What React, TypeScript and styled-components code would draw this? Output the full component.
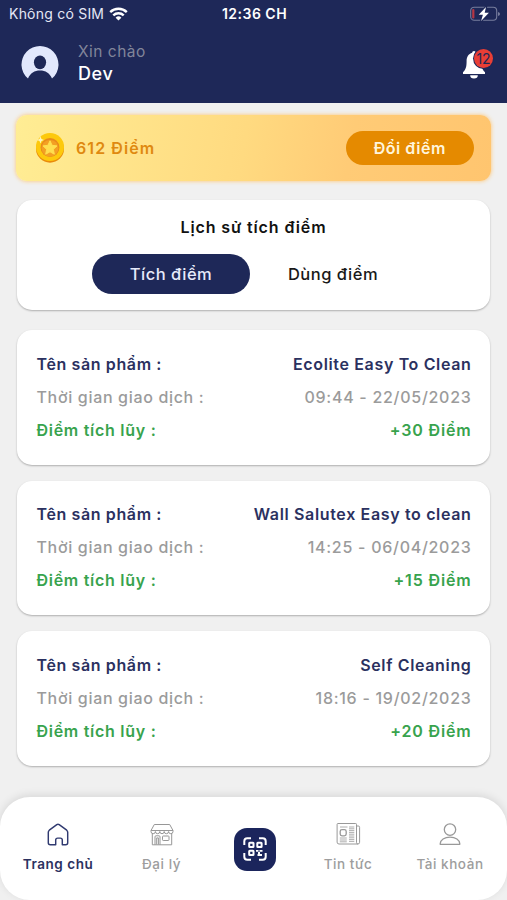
import React from "react";
import styled, { createGlobalStyle } from "styled-components";

const NAVY = "#1e2858";

const GlobalStyle = createGlobalStyle`
  * { box-sizing: border-box; }
  body { margin: 0; background: #f0f0f0; font-family: Inter, "Noto Sans", sans-serif; }
  button { font-family: inherit; border: 0; padding: 0; background: none; }
`;

const Screen = styled.div`
  width: 507px;
  height: 900px;
  display: flex;
  flex-direction: column;
  overflow: hidden;
  background: #f0f0f0;
`;

const Header = styled.header`
  height: 102.5px;
  flex: none;
  background: ${NAVY};
  color: #fff;
`;

const StatusBar = styled.div`
  height: 27px;
  padding: 0 7px 0 9px;
  display: grid;
  grid-template-columns: 1fr auto 1fr;
  align-items: center;
`;

const Carrier = styled.div`
  display: flex;
  align-items: center;
  gap: 5px;
  font-size: 14px;
  letter-spacing: 0.22px;
  color: #e4e7f5;
`;

const Clock = styled.div`
  font-size: 14px;
  font-weight: 600;
  letter-spacing: 0.5px;
`;

const Battery = styled.div`
  display: flex;
  justify-content: flex-end;
`;

const Profile = styled.div`
  height: 73px;
  display: flex;
  align-items: center;
  padding: 0 14px 0 21px;
`;

const Greeting = styled.div`
  margin-left: 19px;
  flex: 1;
`;

const Hello = styled.div`
  font-size: 15.5px;
  line-height: 21px;
  letter-spacing: 0.5px;
  color: #81859a;
`;

const UserName = styled.div`
  font-size: 18px;
  line-height: 24px;
  font-weight: 500;
  letter-spacing: 0.6px;
`;

const BellButton = styled.button`
  position: relative;
  width: 32px;
  height: 32px;
`;

const Badge = styled.span`
  position: absolute;
  left: 13px;
  top: 1px;
  width: 19px;
  height: 19px;
  border-radius: 50%;
  background: #e93e35;
  box-shadow: 0 0 0 1px ${NAVY};
  color: #1f2754;
  font-size: 14px;
  line-height: 19px;
  text-align: center;
`;

const Content = styled.main`
  flex: 1;
  padding: 12.5px 17px 0;
`;

const PointsBanner = styled.section`
  height: 66px;
  margin: 0 -1px 19px;
  padding: 0 17px 0 20px;
  border-radius: 11px;
  background: linear-gradient(100deg, #ffed94 0%, #ffda80 48%, #ffcb76 70%, #ffc56f 100%);
  box-shadow: 0 0 4px #ffc46e;
  display: flex;
  align-items: center;
`;

const Points = styled.span`
  flex: 1;
  margin-left: 12px;
  color: #df8910;
  font-size: 16px;
  font-weight: 600;
  letter-spacing: 1.08px;
`;

const RedeemButton = styled.button`
  width: 128.5px;
  height: 34px;
  border-radius: 17px;
  background: #e58a00;
  color: #fff5dc;
  font-size: 16px;
  font-weight: 600;
  letter-spacing: 0.5px;
`;

const Card = styled.section`
  border-radius: 15px;
  background: #fff;
  box-shadow: 0 1px 2px rgba(0, 0, 0, 0.28);
`;

const HistoryCard = styled(Card)`
  height: 109.5px;
  padding-top: 16.5px;
  margin-bottom: 20.5px;
`;

const Title = styled.h1`
  margin: 0 0 16.5px;
  color: #111;
  font-size: 16px;
  line-height: 21px;
  font-weight: 600;
  letter-spacing: 0.87px;
  text-align: center;
`;

const Tabs = styled.div`
  display: flex;
  padding-left: 75px;
  gap: 4px;
`;

const Tab = styled.button<{ $active?: boolean }>`
  width: 158px;
  height: 40px;
  padding-bottom: 1px;
  border-radius: 20px;
  background: ${(p) => (p.$active ? NAVY : "transparent")};
  color: ${(p) => (p.$active ? "#e6eafa" : "#191919")};
  font-size: 16.5px;
  font-weight: ${(p) => (p.$active ? 500 : 450)};
  letter-spacing: 0.5px;
`;

const TransactionCard = styled(Card)`
  height: 134.5px;
  margin-bottom: 16.2px;
  padding: 17.6px 18.5px 0 19.5px;
`;

const Row = styled.div<{ $color: string; $weight: number }>`
  display: flex;
  justify-content: space-between;
  height: 33px;
  line-height: 33px;
  white-space: pre;
  color: ${(p) => p.$color};
  font-size: 16px;
  font-weight: ${(p) => p.$weight};
`;

const Spaced = styled.span<{ $spacing: number }>`
  letter-spacing: ${(p) => p.$spacing}px;
`;

const Nav = styled.nav`
  height: 103px;
  flex: none;
  border-radius: 30px;
  background: #fff;
  box-shadow: 0 -2px 8px rgba(0, 0, 0, 0.1);
  display: grid;
  grid-template-columns: 116px 91px 96px 90px 114px;
`;

const NavItem = styled.button<{ $active?: boolean }>`
  display: flex;
  flex-direction: column;
  align-items: center;
  padding-top: 26px;
  gap: 8.5px;
  color: ${(p) => (p.$active ? "#2b315f" : "#9d9d9d")};
  font-size: 13.5px;
  line-height: 18px;
  font-weight: ${(p) => (p.$active ? 600 : 500)};
  letter-spacing: 0.55px;
  white-space: nowrap;
`;

const ScanItem = styled.button`
  display: flex;
  justify-content: center;
  padding-top: 30.5px;
`;

const ScanTile = styled.span`
  width: 42px;
  height: 43px;
  border-radius: 13px;
  background: #1b255c;
  display: flex;
  align-items: center;
  justify-content: center;
`;

const WifiIcon = () => (
  <svg width="19" height="14" viewBox="0 0 19 14" fill="none" stroke="#fff" strokeWidth="2.4">
    <path d="M1.2 5.1a11.9 11.9 0 0 1 16.6 0" />
    <path d="M4.3 8.4a7.4 7.4 0 0 1 10.4 0" />
    <path d="M9.5 13.6 6.6 10.7a4.2 4.2 0 0 1 5.8 0z" fill="#fff" stroke="none" />
  </svg>
);

const BatteryIcon = () => (
  <svg width="30" height="16" viewBox="0 0 30 16">
    <rect x="0.7" y="1.2" width="26" height="13" rx="3.5" fill="none" stroke="#777d9d" strokeWidth="1.1" />
    <path d="M28 6v4q2-.5 2-2t-2-2" fill="#777d9d" />
    <rect x="2.2" y="3" width="2.2" height="9.4" rx="1" fill="#b63644" />
    <path d="M16 1 8.7 8.7h4.2L11.1 15l7.8-8.3h-4.2z" fill="#fff" stroke={NAVY} strokeWidth="2.2" paintOrder="stroke" />
  </svg>
);

const AvatarIcon = () => (
  <svg width="38" height="38" viewBox="0 0 38 38">
    <path d="M7 33.6A18.500 18.500 0 1 1 31 33.600C28.600 28.200 24.500 25.600 19 25.600S9.400 28.200 7 33.600z" fill="#e2e8fd" />
    <ellipse cx="19" cy="17.300" rx="6.100" ry="6.900" fill={NAVY} />
  </svg>
);

const BellIcon = () => (
  <svg width="24" height="29" viewBox="0 0 24 29" fill="#fff">
    <path d="M12 1c-1 0-1.800.8-1.800 1.800C6.400 4 4.600 7 4.600 11c0 6-.8 8.500-3.600 11.200V24h22v-1.800C20.200 19.500 19.400 17 19.400 11c0-4-1.800-7-5.600-8.200C13.800 1.800 13 1 12 1z" />
    <path d="M8.200 25.200h7.600a3.800 3.300 0 0 1-7.600 0z" />
  </svg>
);

const BellWrap = styled.span`
  position: absolute;
  left: 1px;
  top: 2px;
  display: flex;
`;

const CoinIcon = () => (
  <svg width="28" height="30" viewBox="0 0 28 30">
    <ellipse cx="14" cy="15.700" rx="14" ry="14" fill="#e98b0b" />
    <circle cx="14" cy="14" r="14" fill="#fdc90c" />
    <circle cx="14" cy="14.500" r="9.400" fill="#e88a1c" />
    <circle cx="14" cy="15.300" r="8.400" fill="#f3a023" />
    <path
      d="m14 7.800 2.100 4.500 4.900.6-3.600 3.400.9 4.900-4.300-2.400-4.300 2.400.9-4.900L7 12.900l4.900-.6z"
      fill="#ffdf4f"
      stroke="#ffdf4f"
      strokeLinejoin="round"
    />
    <path d="m4.500 3.500 1 2.500 2.500 1-2.500 1-1 2.500-1-2.500L1 7l2.500-1z" fill="#fff6bd" />
  </svg>
);

const HomeIcon = () => (
  <svg width="22" height="23" viewBox="0 0 22 23" fill="none" stroke="#303a70" strokeWidth="1.450" strokeLinejoin="round">
    <path d="M1.300 9.300Q1.300 8 2.300 7.200L9.800 1.600q1.200-.9 2.400 0l7.500 5.600q1 .8 1 2.100v10.400q0 2-2 2h-3.400v-4.600q0-2-2-2h-2.600q-2 0-2 2v4.600H3.300q-2 0-2-2z" />
  </svg>
);

const StoreIcon = () => (
  <svg width="24" height="23" viewBox="0 0 24 23" fill="none" stroke="#979797" strokeWidth="1">
    <path d="M4.300 1.500h15.400l3.300 6H1z" />
    <path d="M1 7.500v1a2.200 2.200 0 0 0 4.400 0 2.200 2.200 0 0 0 4.400 0 2.200 2.200 0 0 0 4.400 0 2.200 2.200 0 0 0 4.400 0 2.200 2.200 0 0 0 4.400 0v-1" />
    <path d="M2.300 10.500v11.300h19.400V10.500M5 21.800v-8q0-1 1-1h3q1 0 1 1v8M6.700 21.500v-6.600h1.700v6.600" />
    <rect x="12.500" y="13" width="6.500" height="4.500" rx=".7" />
  </svg>
);

const ScanIcon = () => (
  <svg width="24" height="24" viewBox="0 0 24 24" fill="none" stroke="#fff" strokeWidth="2">
    <path d="M1.300 8V4.300q0-3 3-3H8M16 1.300h3.700q3 0 3 3V8M22.700 16v3.700q0 3-3 3H16M8 22.700H4.300q-3 0-3-3V16" />
    <rect x="6.200" y="5.700" width="4.300" height="4.300" rx=".5" />
    <rect x="14.300" y="5.700" width="4.300" height="4.300" rx=".5" />
    <rect x="6.200" y="13.700" width="4.300" height="4.300" rx=".5" />
    <path d="M13 13.800h2.500M16.500 13.800h3M14.500 18h4.500M15 16h2" strokeWidth="1.800" />
  </svg>
);

const NewsIcon = () => (
  <svg width="25" height="23" viewBox="0 0 25 23" fill="none" stroke="#999" strokeWidth="1">
    <path d="M20.500 3h1.800q1.300 0 1.300 1.300v15q0 1.700-1.700 1.700H3q-1.900 0-1.900-1.900V1.300q0-.8.800-.8h17.800q.8 0 .8.800v18.100q0 1.600 1.400 1.600" />
    <rect x="4.200" y="6.600" width="6" height="6.200" rx="1.800" strokeWidth="1.300" />
    <path d="M4 4h7.500M3.800 15h7M3.800 17h7M3.800 18.800h7M13 4h5.300M13 5.800h5.300M13 7.600h5.300M13 9.400h5.300M13 11.200h5.300M13 13h5.300M13 14.800h5.300M13 16.600h5.300M13 18.400h5.300" strokeWidth=".8" />
  </svg>
);

const UserIcon = () => (
  <svg width="22" height="23" viewBox="0 0 22 23" fill="none" stroke="#999" strokeWidth="1.300" strokeLinejoin="round">
    <circle cx="11" cy="6.600" r="5.700" />
    <path d="M1.200 21.300v-.5a9.800 6.700 0 0 1 19.600 0v.5z" />
  </svg>
);

const transactions = [
  { name: "Ecolite Easy To Clean", time: "09:44 - 22/05/2023", points: "+30 Điểm" },
  { name: "Wall Salutex Easy to clean", time: "14:25 - 06/04/2023", points: "+15 Điểm" },
  { name: "Self Cleaning", time: "18:16 - 19/02/2023", points: "+20 Điểm" },
];

export default function App() {
  return (
    <>
      <GlobalStyle />
      <Screen>
        <Header>
          <StatusBar>
            <Carrier>
              Không có SIM
              <WifiIcon />
            </Carrier>
            <Clock>12:36 CH</Clock>
            <Battery>
              <BatteryIcon />
            </Battery>
          </StatusBar>
          <Profile>
            <AvatarIcon />
            <Greeting>
              <Hello>Xin chào</Hello>
              <UserName>Dev</UserName>
            </Greeting>
            <BellButton>
              <BellWrap>
                <BellIcon />
              </BellWrap>
              <Badge>12</Badge>
            </BellButton>
          </Profile>
        </Header>
        <Content>
          <PointsBanner>
            <CoinIcon />
            <Points>612 Điểm</Points>
            <RedeemButton>Đổi điểm</RedeemButton>
          </PointsBanner>
          <HistoryCard>
            <Title>Lịch sử tích điểm</Title>
            <Tabs>
              <Tab $active>Tích điểm</Tab>
              <Tab>Dùng điểm</Tab>
            </Tabs>
          </HistoryCard>
          {transactions.map((t) => (
            <TransactionCard key={t.name}>
              <Row $color="#2b315f" $weight={600}>
                <Spaced $spacing={0.62}>Tên sản phẩm :</Spaced>
                <Spaced $spacing={0.65}>{t.name}</Spaced>
              </Row>
              <Row $color="#9b9b9b" $weight={500}>
                <Spaced $spacing={0.67}>Thời gian giao dịch :</Spaced>
                <Spaced $spacing={0.72}>{t.time}</Spaced>
              </Row>
              <Row $color="#38a34d" $weight={600}>
                <Spaced $spacing={0.72}>Điểm tích lũy :</Spaced>
                <Spaced $spacing={0.85}>{t.points}</Spaced>
              </Row>
            </TransactionCard>
          ))}
        </Content>
        <Nav>
          <NavItem $active>
            <HomeIcon />
            Trang chủ
          </NavItem>
          <NavItem>
            <StoreIcon />
            Đại lý
          </NavItem>
          <ScanItem>
            <ScanTile>
              <ScanIcon />
            </ScanTile>
          </ScanItem>
          <NavItem>
            <NewsIcon />
            Tin tức
          </NavItem>
          <NavItem>
            <UserIcon />
            Tài khoản
          </NavItem>
        </Nav>
      </Screen>
    </>
  );
}
